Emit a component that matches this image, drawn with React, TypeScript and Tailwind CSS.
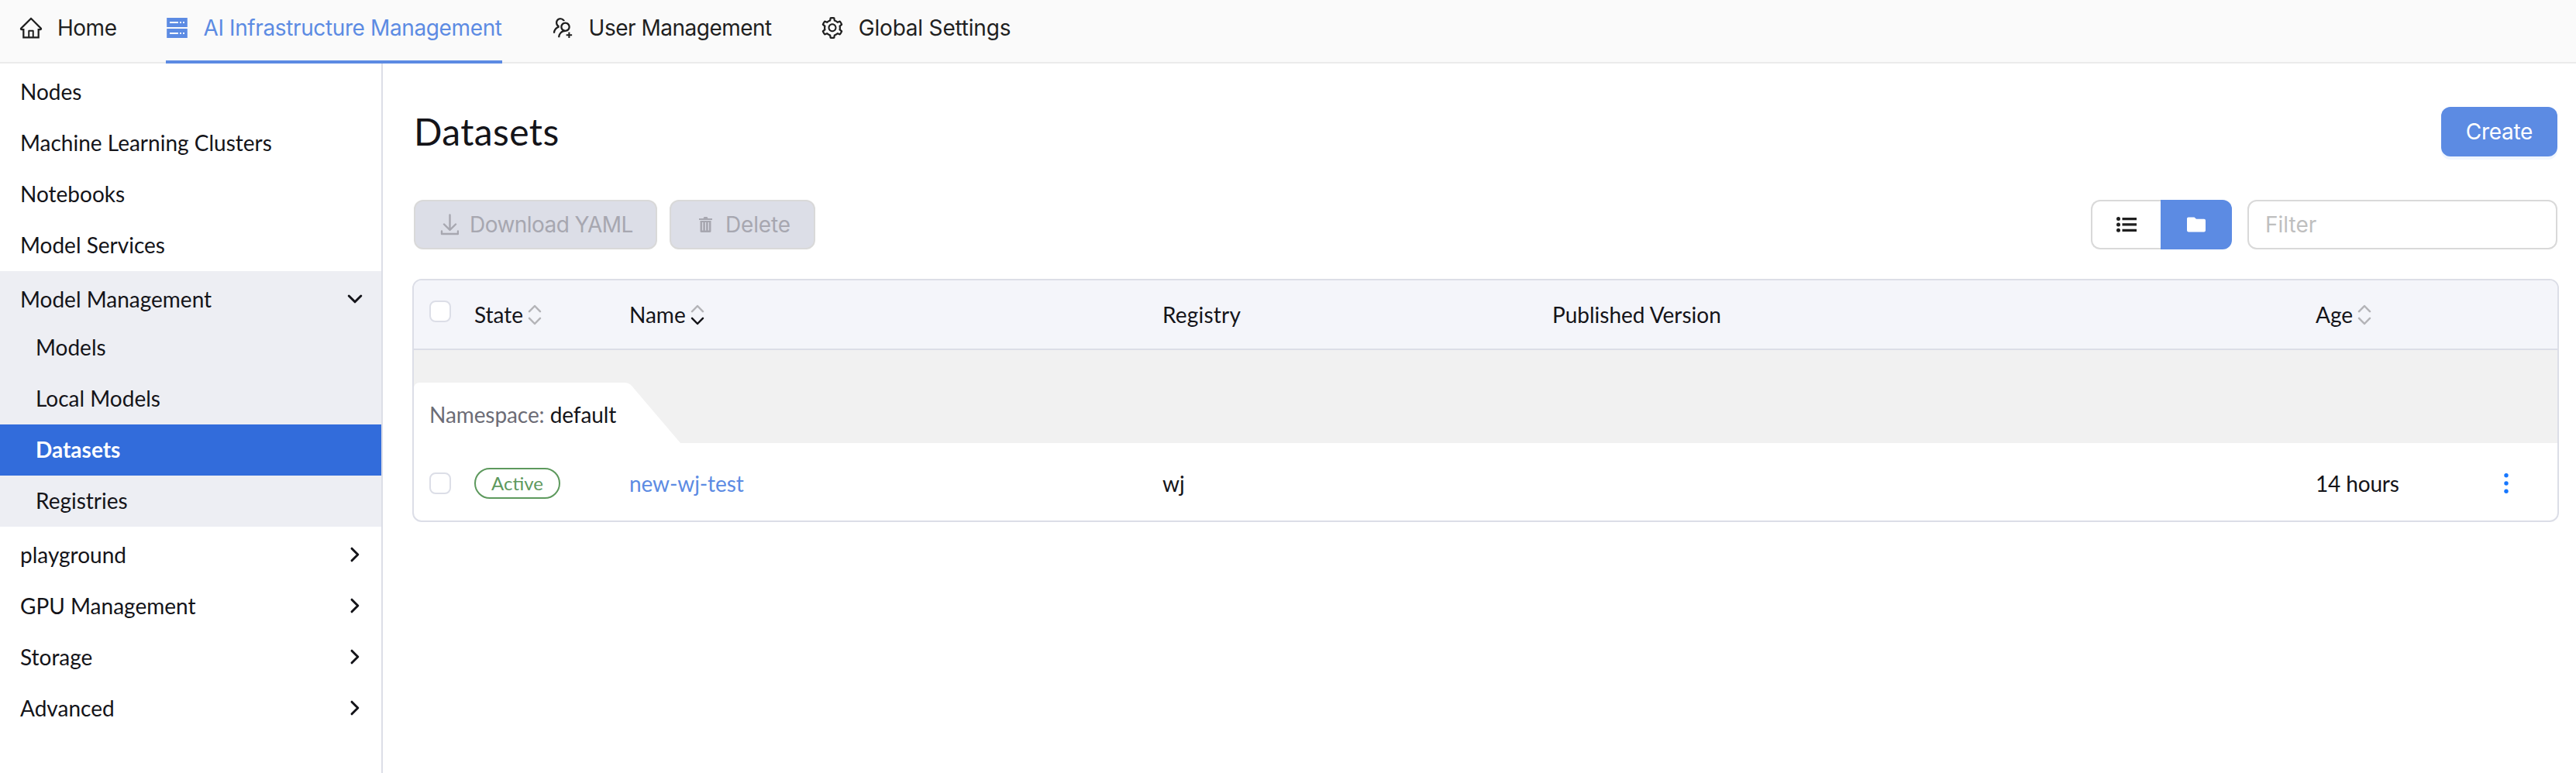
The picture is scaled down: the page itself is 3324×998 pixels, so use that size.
import type { ReactNode } from "react";
import { AiOutlineHome, AiOutlineUsergroupAdd, AiOutlineSetting } from "react-icons/ai";

const ServerIcon = () => (
  <svg width="28" height="28" viewBox="0 0 28 28" fill="none">
    <rect x="1.200" y="1" width="26.600" height="12" fill="#5c8be3" />
    <rect x="1.200" y="15" width="26.600" height="12" fill="#5c8be3" />
    <path d="M5 7H16M18 7h2M22 7h2M5 21H16M18 21h2M22 21h2" stroke="#fff" strokeWidth="2" />
  </svg>
);

const DownloadIcon = () => (
  <svg width="24" height="28" viewBox="0 0 24 28" fill="none" stroke="#a7a7b0" strokeWidth="2.400" strokeLinecap="round" strokeLinejoin="round">
    <path d="M12.500 1.500V20M5 13.500 12.500 21 20 13.500M2 22.500V26h21v-3.500" />
  </svg>
);

const TrashIcon = () => (
  <svg width="17" height="20" viewBox="0 0 17 20" fill="none">
    <path d="M0 2h5.500L6.500 0h4l1 2H17v2H0zM1.500 5h14v13.500a1.500 1.500 0 0 1-1.500 1.500H3a1.500 1.500 0 0 1-1.500-1.500z" fill="#a7a7b0" />
    <path d="M4.700 7v10.500M8.500 7v10.500M12.300 7v10.500" stroke="#dcdee7" strokeWidth="1.200" />
  </svg>
);

const ListIcon = () => (
  <svg width="26" height="20" viewBox="0 0 26 20" fill="#1f1f1f">
    <circle cx="2.500" cy="2.600" r="2.500" />
    <circle cx="2.500" cy="10" r="2.500" />
    <circle cx="2.500" cy="17.300" r="2.500" />
    <path d="M7.500 1h18.500v3.300H7.500zM7.500 8.300h18.500v3.300H7.500zM7.500 15.700h18.500V19H7.500z" />
  </svg>
);

const FolderIcon = () => (
  <svg width="24" height="20" viewBox="0 0 24 20" fill="#fff">
    <path d="M1.800.500h7.700l2.500 2.300h10.200A1.800 1.800 0 0 1 24 4.600v13a1.800 1.800 0 0 1-1.800 1.800H1.800A1.800 1.800 0 0 1 0 17.600V2.300A1.800 1.800 0 0 1 1.800.500z" />
  </svg>
);

const SortIcon = ({ active }: { active?: boolean }) => (
  <svg width="18" height="28" viewBox="0 0 18 28" fill="none" strokeWidth="2.500" strokeLinecap="round" strokeLinejoin="round">
    <path d="M2 10.200 9 3l7 7.200" stroke="#b4b4b8" />
    <path d="M2 18.800 9 26l7-7.200" stroke={active ? "#141419" : "#b4b4b8"} />
  </svg>
);

const Chevron = ({ open }: { open?: boolean }) => (
  <svg width="20" height="20" viewBox="0 0 20 20" fill="none" stroke="#141419" strokeWidth="3" strokeLinecap="round" strokeLinejoin="round">
    <path d={open ? "M2.200 6 10 13.800 17.800 6" : "M6 2.200 13.800 10 6 17.800"} />
  </svg>
);

const Checkbox = () => <span className="block size-7 rounded-lg border-2 border-[#dcdee7] bg-white" />;

const NavItem = ({ icon, label, active, spacing }: { icon: ReactNode; label: string; active?: boolean; spacing: string }) => (
  <a className={`flex h-[82px] items-start whitespace-nowrap font-[Inter,sans-serif] text-[28px] ${active ? "border-b-4 border-[#5c8be3] text-[#5c8be3]" : "text-[#1f1f1f]"}`}>
    <span className="mt-[22px] mr-[20px] flex size-7 items-center justify-center">{icon}</span>
    <span className={`mt-[14px] leading-[44px] ${spacing}`}>{label}</span>
  </a>
);

const plain = ["Nodes", "Machine Learning Clusters", "Notebooks", "Model Services"];
const children = ["Models", "Local Models", "Datasets", "Registries"];
const groups = ["playground", "GPU Management", "Storage", "Advanced"];

const GroupHeader = ({ label, open }: { label: string; open?: boolean }) => (
  <div className="flex h-[66px] items-center justify-between pt-[6px] pr-[24px] pl-[26px]">
    <span>{label}</span>
    <Chevron open={open} />
  </div>
);

const cols = "grid grid-cols-[20px_58px_200px_688px_503px_985px_1fr]";

export default function App() {
  return (
    <div className="flex h-[998px] w-full flex-col overflow-hidden bg-white font-[Lato,sans-serif] text-[28px] text-[#141419]">
      <header className="flex h-[82px] shrink-0 bg-[#fafafa] pl-[26px] shadow-[inset_0_-2px_0_#ebebeb]">
        <nav className="flex gap-[64px]">
          <NavItem icon={<AiOutlineHome size={32} className="shrink-0" />} label="Home" spacing="tracking-[-0.500px]" />
          <NavItem icon={<ServerIcon />} label="AI Infrastructure Management" active spacing="tracking-[-0.380px]" />
          <NavItem icon={<AiOutlineUsergroupAdd size={32} className="shrink-0" />} label="User Management" spacing="tracking-[-0.500px]" />
          <NavItem icon={<AiOutlineSetting size={32} className="shrink-0" />} label="Global Settings" spacing="tracking-[-0.200px]" />
        </nav>
      </header>
      <div className="flex min-h-0 flex-1">
        <aside className="w-[494px] shrink-0 border-r-2 border-[#dcdee7] pt-1">
          {plain.map((t) => (
            <div key={t} className="flex h-[66px] items-center pb-[3px] pl-[26px]">{t}</div>
          ))}
          <div className="bg-[#edeef3]">
            <GroupHeader label="Model Management" open />
            {children.map((t) => (
              <div key={t} className={`flex h-[66px] items-center pb-[2px] pl-[46px] ${t === "Datasets" ? "bg-[#326cdb] font-bold text-white" : ""}`}>{t}</div>
            ))}
          </div>
          {groups.map((t) => (
            <GroupHeader key={t} label={t} />
          ))}
        </aside>
        <main className="flex-1 pt-[56px] pr-[22px] pl-[38px]">
          <div className="flex h-[64px] items-center justify-between pr-[2px] pl-[2px]">
            <h1 className="text-[48px] tracking-[0.400px]">Datasets</h1>
            <button className="h-[64px] w-[150px] rounded-xl bg-[#5c8be3] font-[Inter,sans-serif] tracking-[-0.300px] text-white shadow-[0_4px_0_#f0f6ff]">Create</button>
          </div>
          <div className="mt-[56px] flex h-[64px] items-center pr-[2px] pl-[2px] font-[Inter,sans-serif]">
            <button className="flex h-[64px] w-[314px] items-center rounded-xl border-2 border-[#d9d9d9] bg-[#dcdee7] pl-[32px] text-[#a7a7b0]">
              <DownloadIcon />
              <span className="ml-[14px] tracking-[-0.550px] whitespace-nowrap">Download YAML</span>
            </button>
            <button className="ml-4 flex h-[64px] w-[188px] items-center rounded-xl border-2 border-[#d9d9d9] bg-[#dcdee7] pl-[36px] text-[#a7a7b0]">
              <TrashIcon />
              <span className="ml-[17px] tracking-[-0.150px]">Delete</span>
            </button>
            <div className="ml-auto flex">
              <span className="flex h-[64px] w-[90px] items-center justify-center rounded-l-xl border-2 border-r-0 border-[#d9d9d9]">
                <ListIcon />
              </span>
              <span className="flex h-[64px] w-[92px] items-center justify-center rounded-r-xl bg-[#5c8be3]">
                <FolderIcon />
              </span>
            </div>
            <input placeholder="Filter" className="ml-5 h-[64px] w-[400px] rounded-xl border-2 border-[#d9d9d9] px-[21px] placeholder:text-[#bfbfbf]" />
          </div>
          <section className="mt-[38px] h-[314px] overflow-hidden rounded-xl border-2 border-[#dcdee7]">
            <div className={`${cols} h-[90px] items-center border-b-2 border-[#dcdee7] bg-[#f4f5fa]`}>
              <span />
              <div className="pb-[9px]"><Checkbox /></div>
              <div className="flex items-center gap-[6px]">State<SortIcon /></div>
              <div className="flex items-center gap-[6px]">Name<SortIcon active /></div>
              <div className="tracking-[0.200px]">Registry</div>
              <div>Published Version</div>
              <div className="flex items-center gap-[6px]">Age<SortIcon /></div>
            </div>
            <div className="flex h-[120px] items-end bg-[#f1f1f1]">
              <div className="grid h-[78px] w-[346px]">
                <svg className="col-start-1 row-start-1" width="346" height="78" viewBox="0 0 346 78">
                  <path d="M0 78V8Q0 0 8 0H272Q277 0 281 4L344 78Z" fill="#fff" />
                </svg>
                <div className="col-start-1 row-start-1 self-center pt-[4px] pl-[20px] tracking-[-0.080px] text-[#6c6c76]">
                  Namespace: <span className="text-[#141419]">default</span>
                </div>
              </div>
            </div>
            <div className={`${cols} h-[100px] items-center pt-[4px]`}>
              <span />
              <Checkbox />
              <div className="flex h-[40px] w-[111px] items-center justify-center rounded-full border-2 border-[#5d995d] text-[24px] text-[#5d995d]">Active</div>
              <a className="tracking-[-0.100px] text-[#5c8be3]">new-wj-test</a>
              <div>wj</div>
              <div />
              <div className="flex items-center">
                <span className="tracking-[-0.150px]">14 hours</span>
                <svg className="ml-[134px]" width="8" height="28" viewBox="0 0 8 28" fill="#1677ff">
                  <circle cx="4" cy="3.700" r="2.700" />
                  <circle cx="4" cy="14" r="2.700" />
                  <circle cx="4" cy="24.300" r="2.700" />
                </svg>
              </div>
            </div>
          </section>
        </main>
      </div>
    </div>
  );
}
